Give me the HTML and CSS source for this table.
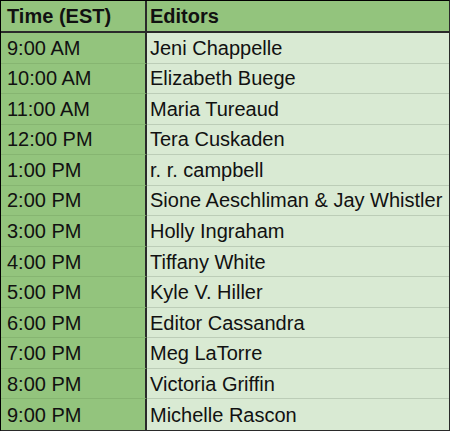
FILE: index.html
```html
<!DOCTYPE html>
<html>
<head>
<meta charset="utf-8">
<link rel="stylesheet" href="styles.css">
</head>
<body>
<div class="sheet">
  <div class="cell time head">Time (EST)</div><div class="cell name head">Editors</div>
  <div class="cell time">9:00 AM</div><div class="cell name">Jeni Chappelle</div>
  <div class="cell time">10:00 AM</div><div class="cell name">Elizabeth Buege</div>
  <div class="cell time">11:00 AM</div><div class="cell name">Maria Tureaud</div>
  <div class="cell time">12:00 PM</div><div class="cell name">Tera Cuskaden</div>
  <div class="cell time">1:00 PM</div><div class="cell name">r. r. campbell</div>
  <div class="cell time">2:00 PM</div><div class="cell name">Sione Aeschliman &amp; Jay Whistler</div>
  <div class="cell time">3:00 PM</div><div class="cell name">Holly Ingraham</div>
  <div class="cell time">4:00 PM</div><div class="cell name">Tiffany White</div>
  <div class="cell time">5:00 PM</div><div class="cell name">Kyle V. Hiller</div>
  <div class="cell time">6:00 PM</div><div class="cell name">Editor Cassandra</div>
  <div class="cell time">7:00 PM</div><div class="cell name">Meg LaTorre</div>
  <div class="cell time">8:00 PM</div><div class="cell name">Victoria Griffin</div>
  <div class="cell time last">9:00 PM</div><div class="cell name last">Michelle Rascon</div>
</div>
</body>
</html>
```
FILE: styles.css
```css
html, body {
  margin: 0;
  padding: 0;
  background: #ffffff;
}
.sheet {
  box-sizing: border-box;
  width: 450px;
  height: 431px;
  border-top: 1px solid #000;
  border-left: 1px solid #000;
  border-right: 1px solid #2a2a2a;
  border-bottom: 1px solid #2a2a2a;
  display: grid;
  grid-template-columns: 146px 1fr;
  grid-template-rows: 32px repeat(13, 1fr);
  font-family: "Liberation Sans", Arial, sans-serif;
  font-size: 20px;
  color: #111;
}
.cell {
  box-sizing: border-box;
  display: flex;
  align-items: center;
  white-space: nowrap;
  overflow: hidden;
  border-bottom: 1px solid #bccdb7;
  padding-top: 1px;
}
.time {
  background: #93c47d;
  padding-left: 6px;
  border-right: 2px solid #2a2a2a;
  border-bottom-color: #86b571;
}
.name {
  background: #d9ead3;
  padding-left: 3px;
}
.head {
  background: #93c47d;
  font-weight: bold;
  border-bottom: 2px solid #2a2a2a;
}
.last {
  border-bottom: none;
}
```
